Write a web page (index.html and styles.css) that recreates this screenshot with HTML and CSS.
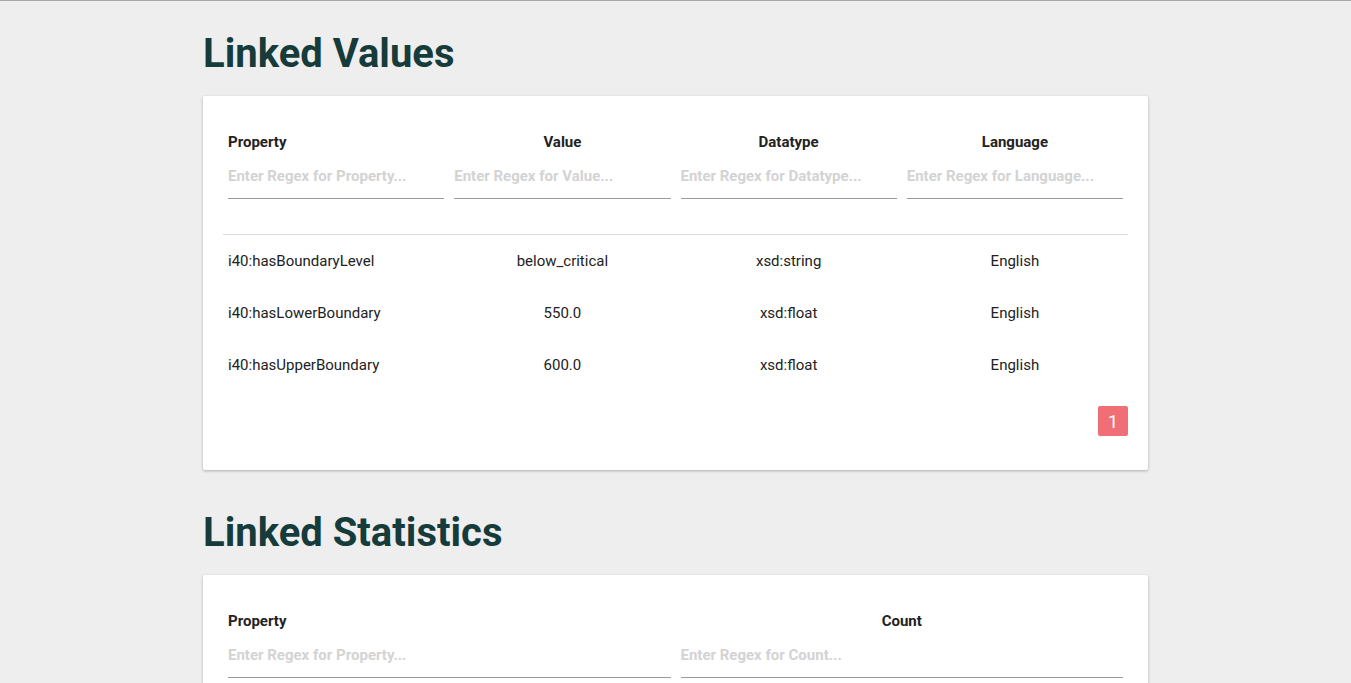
FILE: index.html
```html
<!DOCTYPE html>
<html lang="en">
<head>
<meta charset="utf-8">
<title>Linked Values</title>
<link rel="stylesheet" href="styles.css">
</head>
<body>
<div class="topline"></div>
<main class="container">
  <section class="section">
    <h1 class="title">Linked Values</h1>
    <div class="card">
      <div class="grid cols-4 head">
        <div class="hcell left"><div class="hlabel">Property</div><input class="filter" placeholder="Enter Regex for Property..."></div>
        <div class="hcell"><div class="hlabel">Value</div><input class="filter" placeholder="Enter Regex for Value..."></div>
        <div class="hcell"><div class="hlabel">Datatype</div><input class="filter" placeholder="Enter Regex for Datatype..."></div>
        <div class="hcell"><div class="hlabel">Language</div><input class="filter" placeholder="Enter Regex for Language..."></div>
      </div>
      <div class="rows">
        <div class="grid cols-4 row">
          <div class="cell left">i40:hasBoundaryLevel</div>
          <div class="cell">below_critical</div>
          <div class="cell">xsd:string</div>
          <div class="cell">English</div>
        </div>
        <div class="grid cols-4 row">
          <div class="cell left">i40:hasLowerBoundary</div>
          <div class="cell">550.0</div>
          <div class="cell">xsd:float</div>
          <div class="cell">English</div>
        </div>
        <div class="grid cols-4 row">
          <div class="cell left">i40:hasUpperBoundary</div>
          <div class="cell">600.0</div>
          <div class="cell">xsd:float</div>
          <div class="cell">English</div>
        </div>
      </div>
      <div class="pager"><button class="page active">1</button></div>
    </div>
  </section>
  <section class="section">
    <h1 class="title">Linked Statistics</h1>
    <div class="card">
      <div class="grid cols-2 head">
        <div class="hcell left"><div class="hlabel">Property</div><input class="filter" placeholder="Enter Regex for Property..."></div>
        <div class="hcell"><div class="hlabel">Count</div><input class="filter" placeholder="Enter Regex for Count..."></div>
      </div>
      <div class="rows">
        <div class="grid cols-2 row">
          <div class="cell left">i40:hasBoundaryLevel</div>
          <div class="cell">1</div>
        </div>
      </div>
      <div class="pager"><button class="page active">1</button></div>
    </div>
  </section>
</main>
</body>
</html>
```
FILE: styles.css
```css
html {
  scrollbar-width: none;
}
html::-webkit-scrollbar {
  display: none;
}
body {
  margin: 0;
  background: #eeeeee;
  font-family: Roboto, "Liberation Sans", Arial, sans-serif;
  color: #222;
}
.topline {
  height: 1px;
  background: #a9a9a9;
}
.container {
  width: 945px;
  margin: 0 auto;
  padding-top: 29px;
}
.section {
  margin-bottom: 39px;
}
.title {
  margin: 0 0 18px;
  font-size: 40px;
  line-height: 48px;
  font-weight: 700;
  color: #163b3b;
}
.card {
  background: #fff;
  padding: 0 20px 34px;
  box-shadow: 0 1px 3px rgba(0, 0, 0, 0.28);
  border-radius: 2px;
}
.grid {
  display: grid;
}
.cols-4 {
  grid-template-columns: repeat(4, 1fr);
}
.cols-2 {
  grid-template-columns: repeat(2, 1fr);
}
.head {
  padding-bottom: 35px;
}
.hcell {
  padding: 36px 5px 0;
  text-align: center;
}
.hcell.left, .cell.left {
  text-align: left;
}
.hlabel {
  font-size: 15px;
  line-height: 20px;
  font-weight: 700;
  color: #222;
}
.filter {
  display: block;
  box-sizing: border-box;
  width: 100%;
  margin-top: 14px;
  padding: 0 0 12px;
  border: none;
  border-bottom: 1px solid #9a9a9a;
  outline: none;
  font-family: inherit;
  font-size: 15px;
  line-height: 20px;
  font-weight: 700;
  color: #222;
  background: transparent;
}
.filter::placeholder {
  color: #d3d3d3;
  opacity: 1;
}
.rows {
  border-top: 1px solid #dcdcdc;
}
.row {
  height: 52px;
  align-items: center;
}
.cell {
  padding: 0 5px;
  font-size: 15px;
  line-height: 20px;
  text-align: center;
  color: #222;
}
.pager {
  display: flex;
  justify-content: flex-end;
  padding-top: 15px;
}
.page {
  width: 30px;
  height: 30px;
  padding: 0;
  border: none;
  border-radius: 2px;
  font-family: inherit;
  font-size: 18px;
  color: #fff;
  background: #f06e75;
}
```
